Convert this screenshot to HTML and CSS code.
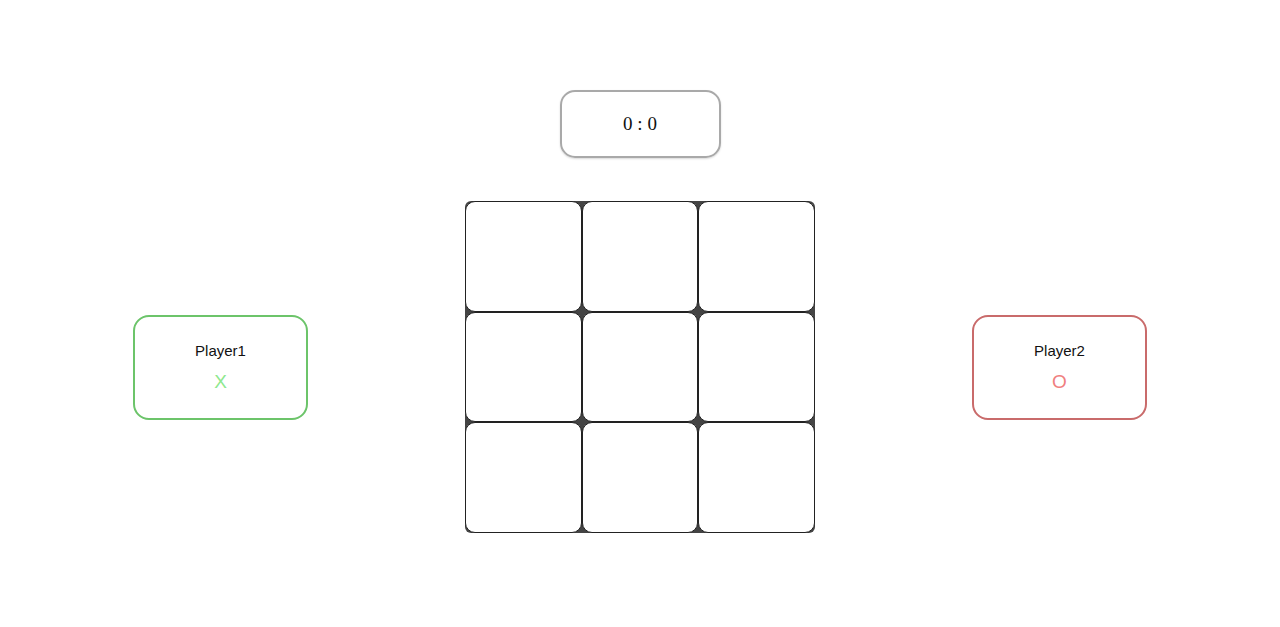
FILE: index.html
```html
<!DOCTYPE html>
<html>
<head>
<meta charset="utf-8">
<link rel="stylesheet" href="styles.css">
</head>
<body>
<div class="app">
  <div class="score">0 : 0</div>
  <div class="arena">
    <div class="player player-x">
      <div class="name">Player1</div>
      <div class="mark">X</div>
    </div>
    <div class="board">
      <div class="cell"></div><div class="cell"></div><div class="cell"></div>
      <div class="cell"></div><div class="cell"></div><div class="cell"></div>
      <div class="cell"></div><div class="cell"></div><div class="cell"></div>
    </div>
    <div class="player player-o">
      <div class="name">Player2</div>
      <div class="mark">O</div>
    </div>
  </div>
</div>
</body>
</html>
```
FILE: styles.css
```css
html, body {
  margin: 0;
  padding: 0;
  background: #fff;
}
.app {
  display: flex;
  flex-direction: column;
  align-items: center;
  padding-top: 90px;
}
.score {
  box-sizing: border-box;
  width: 161px;
  height: 68px;
  border: 2px solid #a9a9a9;
  border-radius: 15px;
  display: flex;
  align-items: center;
  justify-content: center;
  font-family: "Liberation Serif", serif;
  font-size: 19px;
  color: #111;
  box-shadow: 0 1px 2px rgba(0,0,0,0.15);
}
.arena {
  margin-top: 43px;
  display: flex;
  align-items: center;
  gap: 157px;
}
.player {
  box-sizing: border-box;
  width: 175px;
  height: 105px;
  border: 2px solid;
  border-radius: 16px;
  display: flex;
  flex-direction: column;
  align-items: center;
  padding-top: 25px;
  font-family: "Liberation Sans", Arial, sans-serif;
}
.player-x { border-color: #6cc46a; }
.player-o { border-color: #c96b6b; }
.name {
  font-size: 15px;
  color: #111;
  line-height: 18px;
}
.mark {
  margin-top: 11px;
  font-size: 19px;
  line-height: 22px;
}
.player-x .mark { color: #8ee88e; }
.player-o .mark { color: #f08080; }
.board {
  width: 350px;
  height: 332px;
  display: grid;
  grid-template-columns: repeat(3, 1fr);
  grid-template-rows: repeat(3, 1fr);
  background: #444;
  border-radius: 6px;
}
.cell {
  background: #fff;
  border: 1px solid #222;
  border-radius: 10px;
}
```
